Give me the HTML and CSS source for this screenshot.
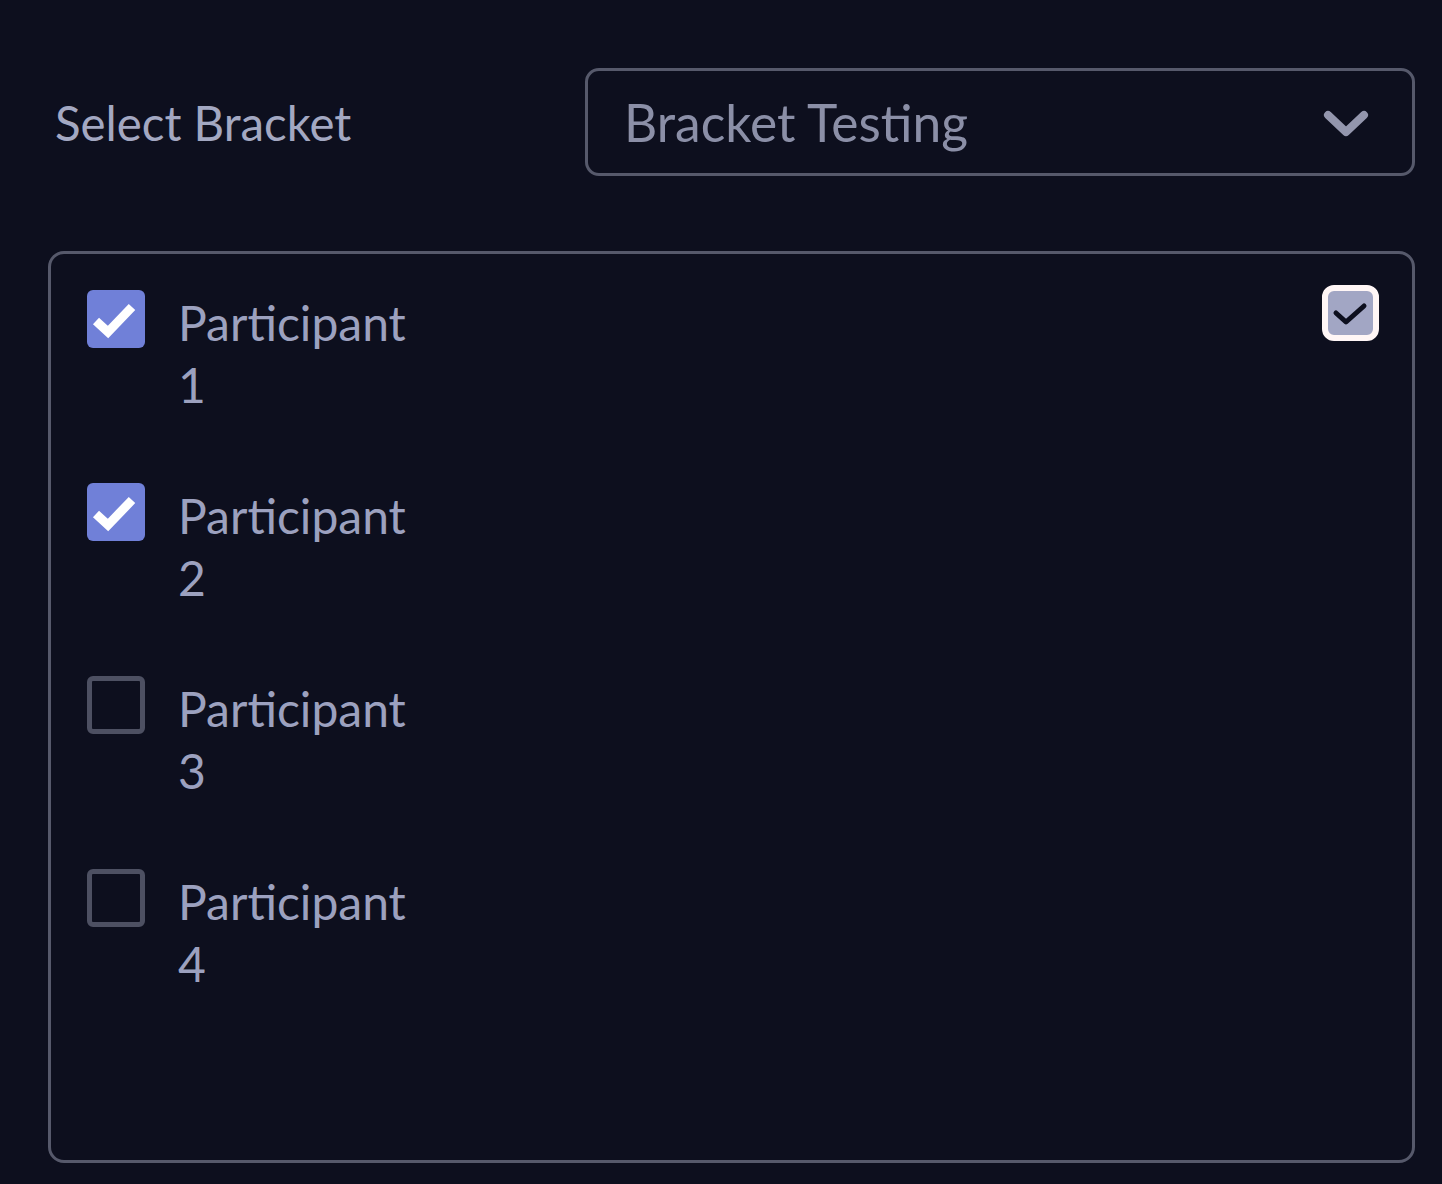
FILE: index.html
```html
<!DOCTYPE html>
<html lang="en">
<head>
<meta charset="utf-8">
<title>Select Bracket</title>
<link rel="stylesheet" href="styles.css">
</head>
<body>
<div class="page">
  <div class="header">
    <label class="field-label">Select Bracket</label>
    <div class="select">
      <span class="select-value">Bracket Testing</span>
      <svg class="chevron" width="50" height="32" viewBox="0 0 50 32"><path d="M7 8 L25 25 L43 8" fill="none" stroke="#9396ad" stroke-width="8" stroke-linecap="round" stroke-linejoin="round"/></svg>
    </div>
  </div>
  <div class="panel">
    <ul class="list">
      <li class="row">
        <span class="box checked"><svg width="58" height="58" viewBox="0 0 58 58"><path d="M9 31 L21 42 L45 17" fill="none" stroke="#fff" stroke-width="9"/></svg></span>
        <span class="name">Participant 1</span>
      </li>
      <li class="row">
        <span class="box checked"><svg width="58" height="58" viewBox="0 0 58 58"><path d="M9 31 L21 42 L45 17" fill="none" stroke="#fff" stroke-width="9"/></svg></span>
        <span class="name">Participant 2</span>
      </li>
      <li class="row">
        <span class="box"></span>
        <span class="name">Participant 3</span>
      </li>
      <li class="row">
        <span class="box"></span>
        <span class="name">Participant 4</span>
      </li>
    </ul>
    <span class="select-all"><svg width="45" height="44" viewBox="0 0 45 44"><path d="M8 22 L18 31 L36 15" fill="none" stroke="#0d0f1e" stroke-width="5" stroke-linecap="round" stroke-linejoin="round"/></svg></span>
  </div>
</div>
</body>
</html>
```

FILE: styles.css
```css
html, body {
  margin: 0;
  padding: 0;
  background: #0d0f1e;
}
body {
  font-family: Lato, "Noto Sans", sans-serif;
  color: #9ca1bf;
}
.page {
  padding: 68px 27px 0 48px;
}
.header {
  display: flex;
  align-items: center;
  height: 108px;
}
.field-label {
  width: 530px;
  padding-left: 7px;
  font-size: 47.4px;
  color: #a3a8c2;
}
.select {
  flex: 1;
  height: 108px;
  box-sizing: border-box;
  border: 3px solid #56596b;
  border-radius: 14px;
  display: flex;
  align-items: center;
  justify-content: space-between;
  padding: 0 41px 0 36px;
}
.select-value {
  font-size: 51.5px;
  color: #8b8fa7;
}
.chevron {
  display: block;
  margin-top: 2px;
}
.panel {
  margin-top: 75px;
  height: 912px;
  box-sizing: border-box;
  border: 3px solid #56596b;
  border-radius: 16px;
  padding: 36px 33px 0 36px;
  display: flex;
  justify-content: space-between;
  align-items: flex-start;
}
.list {
  list-style: none;
  margin: 0;
  padding: 0;
  display: flex;
  flex-direction: column;
  gap: 67px;
}
.row {
  display: flex;
  align-items: flex-start;
  gap: 33px;
}
.box {
  width: 58px;
  height: 58px;
  box-sizing: border-box;
  border: 5px solid #4d5062;
  border-radius: 6px;
  flex: none;
}
.box.checked {
  border: none;
  background: #7080d8;
}
.box svg {
  display: block;
}
.name {
  width: 240px;
  padding-top: 2px;
  font-size: 48px;
  line-height: 62px;
  color: #9ca1bf;
}
.select-all {
  margin-top: -5px;
  width: 45px;
  height: 44px;
  border: 6px solid #fff6f6;
  border-radius: 12px;
  background: #a2a6c4;
  display: block;
  flex: none;
}
.select-all svg {
  display: block;
}
```
